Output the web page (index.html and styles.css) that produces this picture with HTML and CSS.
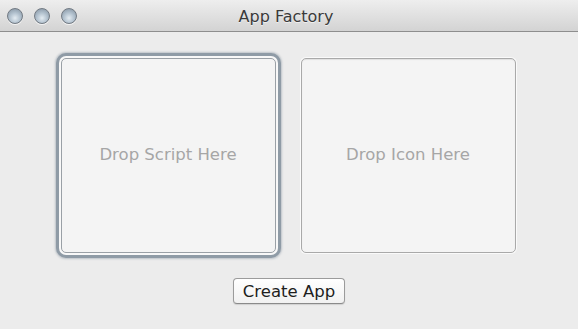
FILE: index.html
```html
<!DOCTYPE html>
<html>
<head>
<meta charset="utf-8">
<link rel="stylesheet" href="styles.css">
</head>
<body>
<div class="window">
  <div class="titlebar">
    <div class="lights">
      <span class="light"></span>
      <span class="light"></span>
      <span class="light"></span>
    </div>
    <div class="title">App Factory</div>
  </div>
  <div class="content">
    <div class="wells">
      <div class="well focused"><span>Drop Script Here</span></div>
      <div class="well"><span>Drop Icon Here</span></div>
    </div>
    <div class="actions">
      <button class="btn">Create App</button>
    </div>
  </div>
</div>
</body>
</html>
```

FILE: styles.css
```css
html, body {
  margin: 0;
  padding: 0;
  background: #ececec;
}
.window {
  width: 578px;
  height: 329px;
  background: #ececec;
  font-family: "DejaVu Sans", "Liberation Sans", sans-serif;
  overflow: hidden;
}
.titlebar {
  position: relative;
  height: 31px;
  background: linear-gradient(#eeeeee, #d3d3d3);
  border-bottom: 1px solid #8e8e8e;
  display: flex;
  align-items: center;
  justify-content: center;
}
.lights {
  position: absolute;
  left: 7px;
  top: 8px;
  display: flex;
  gap: 11px;
}
.light {
  width: 14px;
  height: 14px;
  border-radius: 50%;
  border: 1px solid #727a83;
  background: radial-gradient(circle at 50% 65%, #e4ecf2 0%, #b3c2cf 45%, #7f8e9c 100%);
  box-shadow: 0 1px 0 rgba(255,255,255,0.7);
}
.title {
  font-size: 16px;
  color: #3a3a3a;
  margin-right: 6px;
  margin-top: 1px;
  text-shadow: 0 1px 0 rgba(255,255,255,0.6);
}
.content {
  display: flex;
  flex-direction: column;
  align-items: center;
  padding-top: 26px;
}
.wells {
  display: flex;
  gap: 25px;
  margin-right: 2px;
}
.well {
  width: 213px;
  height: 193px;
  border: 1px solid #a9a9a9;
  border-radius: 5px;
  background: #f4f4f4;
  box-shadow: 0 0 0 1px #fafafa, inset 0 1px 1px rgba(0,0,0,0.08);
  display: flex;
  align-items: center;
  justify-content: center;
  font-size: 16.5px;
  color: #a6a6a6;
}
.well.focused {
  border-color: #9aa0a6;
  box-shadow: 0 0 0 2px #f8f8f8, 0 0 0 5px #8f9ba6, 0 0 2px 6px rgba(120,135,150,0.4);
}
.well span {
  margin-top: -2px;
}
.actions {
  margin-top: 25px;
}
.btn {
  width: 112px;
  height: 26px;
  padding: 0;
  font-family: "DejaVu Sans", "Liberation Sans", sans-serif;
  font-size: 16.5px;
  color: #1e1e1e;
  border: 1px solid #9b9b9b;
  border-bottom-color: #8a8a8a;
  border-radius: 4px;
  background: linear-gradient(#ffffff, #f1f1f1);
  box-shadow: 0 1px 1px rgba(0,0,0,0.12);
}
```
